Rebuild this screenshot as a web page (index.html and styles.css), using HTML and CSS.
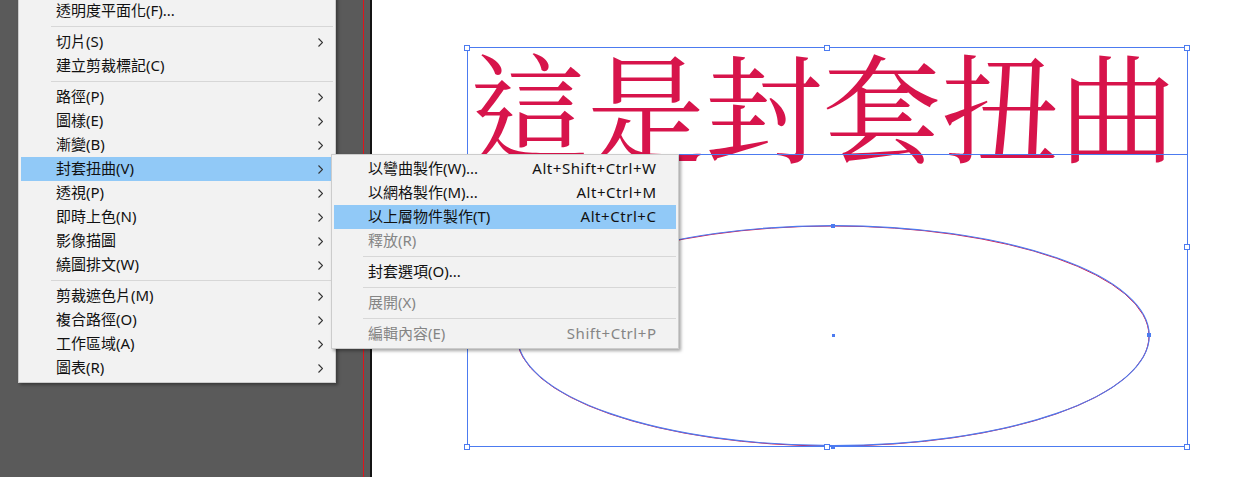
FILE: index.html
```html
<!DOCTYPE html>
<html lang="zh-Hant">
<head>
<meta charset="utf-8">
<title>封套扭曲</title>
<link rel="stylesheet" href="styles.css">
</head>
<body>
<div class="app">
  <aside class="panel"><div class="guide"></div></aside>
  <main class="canvas">
    <div class="art-text">這是封套扭曲</div>
    <svg class="overlay" width="868" height="477" viewBox="372 0 868 477">
      <ellipse cx="833" cy="336" rx="316" ry="110" fill="none" stroke="#d7144b" stroke-width="1"/>
      <ellipse cx="833.3" cy="335.6" rx="316" ry="110" fill="none" stroke="#4c7bf0" stroke-width="1.1"/>
      <g stroke="#4c7bf0" stroke-width="1" fill="none" shape-rendering="crispEdges">
        <rect x="467.5" y="47.5" width="720" height="399"/>
        <line x1="467" y1="154.5" x2="1188" y2="154.5"/>
      </g>
      <g fill="#4c7bf0" shape-rendering="crispEdges">
        <rect x="831" y="224" width="4" height="4"/>
        <rect x="1147" y="333" width="4" height="4"/>
        <rect x="831" y="445" width="4" height="4"/>
        <rect x="832" y="334" width="3" height="3"/>
      </g>
      <g fill="#fff" stroke="#4c7bf0" stroke-width="1" shape-rendering="crispEdges">
        <rect x="464.5" y="45.5" width="5" height="5"/>
        <rect x="824.5" y="45.5" width="5" height="5"/>
        <rect x="1184.5" y="45.5" width="5" height="5"/>
        <rect x="1184.5" y="244.5" width="5" height="5"/>
        <rect x="1184.5" y="444.5" width="5" height="5"/>
        <rect x="824.5" y="444.5" width="5" height="5"/>
        <rect x="464.5" y="444.5" width="5" height="5"/>
      </g>
    </svg>
  </main>
</div>

<div class="menu main-menu">
  <div class="item"><span class="label">透明度平面化(F)...</span></div>
  <div class="sep"></div>
  <div class="item"><span class="label">切片(S)</span><svg class="chev" width="5" height="9" viewBox="0 0 5 9"><path d="M0.5 0.5 L4.5 4.5 L0.5 8.5"/></svg></div>
  <div class="item"><span class="label">建立剪裁標記(C)</span></div>
  <div class="sep"></div>
  <div class="item"><span class="label">路徑(P)</span><svg class="chev" width="5" height="9" viewBox="0 0 5 9"><path d="M0.5 0.5 L4.5 4.5 L0.5 8.5"/></svg></div>
  <div class="item"><span class="label">圖樣(E)</span><svg class="chev" width="5" height="9" viewBox="0 0 5 9"><path d="M0.5 0.5 L4.5 4.5 L0.5 8.5"/></svg></div>
  <div class="item"><span class="label">漸變(B)</span><svg class="chev" width="5" height="9" viewBox="0 0 5 9"><path d="M0.5 0.5 L4.5 4.5 L0.5 8.5"/></svg></div>
  <div class="item active"><span class="label">封套扭曲(V)</span><svg class="chev" width="5" height="9" viewBox="0 0 5 9"><path d="M0.5 0.5 L4.5 4.5 L0.5 8.5"/></svg></div>
  <div class="item"><span class="label">透視(P)</span><svg class="chev" width="5" height="9" viewBox="0 0 5 9"><path d="M0.5 0.5 L4.5 4.5 L0.5 8.5"/></svg></div>
  <div class="item"><span class="label">即時上色(N)</span><svg class="chev" width="5" height="9" viewBox="0 0 5 9"><path d="M0.5 0.5 L4.5 4.5 L0.5 8.5"/></svg></div>
  <div class="item"><span class="label">影像描圖</span><svg class="chev" width="5" height="9" viewBox="0 0 5 9"><path d="M0.5 0.5 L4.5 4.5 L0.5 8.5"/></svg></div>
  <div class="item"><span class="label">繞圖排文(W)</span><svg class="chev" width="5" height="9" viewBox="0 0 5 9"><path d="M0.5 0.5 L4.5 4.5 L0.5 8.5"/></svg></div>
  <div class="sep"></div>
  <div class="item"><span class="label">剪裁遮色片(M)</span><svg class="chev" width="5" height="9" viewBox="0 0 5 9"><path d="M0.5 0.5 L4.5 4.5 L0.5 8.5"/></svg></div>
  <div class="item"><span class="label">複合路徑(O)</span><svg class="chev" width="5" height="9" viewBox="0 0 5 9"><path d="M0.5 0.5 L4.5 4.5 L0.5 8.5"/></svg></div>
  <div class="item"><span class="label">工作區域(A)</span><svg class="chev" width="5" height="9" viewBox="0 0 5 9"><path d="M0.5 0.5 L4.5 4.5 L0.5 8.5"/></svg></div>
  <div class="item"><span class="label">圖表(R)</span><svg class="chev" width="5" height="9" viewBox="0 0 5 9"><path d="M0.5 0.5 L4.5 4.5 L0.5 8.5"/></svg></div>
</div>

<div class="menu sub-menu">
  <div class="item"><span class="label">以彎曲製作(W)...</span><span class="key">Alt+Shift+Ctrl+W</span></div>
  <div class="item"><span class="label">以網格製作(M)...</span><span class="key">Alt+Ctrl+M</span></div>
  <div class="item active"><span class="label">以上層物件製作(T)</span><span class="key">Alt+Ctrl+C</span></div>
  <div class="item disabled"><span class="label">釋放(R)</span></div>
  <div class="sep"></div>
  <div class="item"><span class="label">封套選項(O)...</span></div>
  <div class="sep"></div>
  <div class="item disabled"><span class="label">展開(X)</span></div>
  <div class="sep"></div>
  <div class="item disabled"><span class="label">編輯內容(E)</span><span class="key">Shift+Ctrl+P</span></div>
</div>
</body>
</html>
```

FILE: styles.css
```css
* { box-sizing: border-box; }

html, body {
  margin: 0;
  padding: 0;
  width: 1240px;
  height: 477px;
  overflow: hidden;
}

body {
  position: relative;
  font-family: "Noto Sans", "Noto Sans CJK TC", sans-serif;
}

.app {
  display: flex;
  width: 1240px;
  height: 477px;
}

.panel {
  width: 372px;
  flex: none;
  background: #5a5a5a;
  border-right: 2px solid #141414;
  display: flex;
  justify-content: flex-end;
}

.guide {
  width: 1px;
  margin-right: 6px;
  background: #e0141b;
}

.canvas {
  flex: 1;
  position: relative;
  background: #ffffff;
}

.art-text {
  position: absolute;
  left: 97px;
  top: 44px;
  font-family: "Noto Serif CJK TC", "Noto Sans CJK TC", serif;
  font-size: 118px;
  line-height: 1;
  color: #d7144b;
  white-space: nowrap;
}

.overlay {
  position: absolute;
  left: 0;
  top: 0;
}

/* Menus */
.menu {
  position: absolute;
  background: #f2f2f2;
  border: 1px solid #cccccc;
  padding: 2px 0;
  box-shadow: 2px 2px 3px rgba(0, 0, 0, 0.35);
  font-size: 15px;
  color: #111;
}

.main-menu {
  left: 18px;
  top: -4px;
  width: 318px;
}

.sub-menu {
  left: 331px;
  top: 154px;
  width: 348px;
}

.item {
  height: 24px;
  display: flex;
  align-items: center;
  margin: 0 4px 0 2px;
  padding-left: 35px;
  padding-bottom: 3px;
  white-space: nowrap;
}

.main-menu .item { padding-right: 8px; }
.sub-menu .item { padding-left: 34px; padding-right: 20px; margin-right: 2px; }

.item.active { background: #91c9f7; }
.item.disabled { color: #858585; }

.label { flex: 1; }

.key {
  text-align: right;
  letter-spacing: 0.55px;
  margin-right: -0.55px;
}

.chev {
  display: block;
  margin-top: 3px;
  fill: none;
  stroke: #333;
  stroke-width: 1.1;
}

.sep {
  height: 7px;
  display: flex;
  align-items: center;
  margin: 0 2px 0 32px;
}

.sep::after {
  content: "";
  display: block;
  width: 100%;
  height: 1px;
  background: #d7d7d7;
}

.sub-menu .sep { margin-left: 31px; }
```
